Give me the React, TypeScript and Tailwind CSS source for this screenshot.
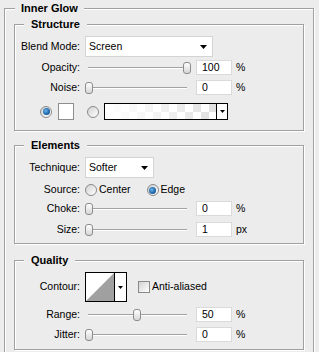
import React from "react";

const LABEL = "w-[65px] shrink-0 text-right";

const Arrow = ({ w = 7, h = 4 }: { w?: number; h?: number }) => (
  <svg width={w} height={h} viewBox={`0 0 ${w} ${h}`}>
    <path d={`M0 0H${w}L${w / 2} ${h}Z`} fill="#000" />
  </svg>
);

function Frame({
  title,
  className,
  legend,
  children,
}: {
  title: string;
  className: string;
  legend: string;
  children: React.ReactNode;
}) {
  return (
    <div
      className={`flex flex-col border border-[#a0a0a0] shadow-[inset_1px_1px_0_#fff,1px_1px_0_#fff] ${className}`}
    >
      <span
        className={`-mt-[7px] self-start bg-[#ececec] text-[11px] leading-[13px] font-bold ${legend}`}
      >
        {title}
      </span>
      {children}
    </div>
  );
}

function Radio({ on }: { on?: boolean }) {
  return (
    <span className="flex h-[12px] w-[12px] shrink-0 items-center justify-center rounded-full border border-[#8a8a8a] bg-linear-to-br from-[#d2d2d2] to-white">
      {on && (
        <span className="h-[7px] w-[7px] rounded-full bg-[radial-gradient(circle_at_40%_40%,#6fb4e8_0,#1f6aad_55%,#0f3f70_100%)]" />
      )}
    </span>
  );
}

function Select({ value, width }: { value: string; width: string }) {
  return (
    <div
      className={`ml-[5px] flex h-[21px] items-center justify-between border border-[#d4d4d4] bg-white pr-[5px] pl-[3px] ${width}`}
    >
      <span>{value}</span>
      <Arrow />
    </div>
  );
}

function SliderRow({
  label,
  value,
  pos,
  unit,
  className,
}: {
  label: string;
  value: string;
  pos: number;
  unit: string;
  className: string;
}) {
  return (
    <div className={`flex h-[15px] items-center ${className}`}>
      <span className={LABEL}>{label}</span>
      <div className="relative ml-[5px] flex h-[15px] w-[106px] items-center">
        <div className="mr-[4px] ml-[3px] h-px flex-1 bg-[#a2a2a2] shadow-[0_1px_0_#fff]" />
        <div
          className="absolute top-[2px] h-[12px] w-[8px] rounded-[3px] border border-[#8c8c8c] bg-linear-to-b from-white to-[#d6d6d6]"
          style={{ left: pos }}
        />
      </div>
      <div className="ml-[5px] flex h-[15px] w-[36px] items-center border border-[#dadada] bg-white pl-[5px]">
        {value}
      </div>
      <span className="ml-[4px]">{unit}</span>
    </div>
  );
}

export default function App() {
  return (
    <div className="h-[352px] w-[319px] overflow-hidden bg-[#ececec] pt-[8px] pl-[4px] font-['Liberation_Sans',Arial,sans-serif] text-[10.5px] text-black">
      <Frame title="Inner Glow" legend="ml-[10px] px-[6px]" className="w-[310px] pb-[20px]">
        {/* Structure */}
        <Frame title="Structure" legend="ml-[9px] px-[7px]" className="mt-[9px] ml-[9px] w-[290px] pb-[10px]">
          <div className="mt-[5px] flex h-[21px] items-center">
            <span className={LABEL}>Blend Mode:</span>
            <Select value="Screen" width="w-[128px]" />
          </div>
          <SliderRow label="Opacity:" value="100" pos={98} unit="%" className="mt-[3px]" />
          <SliderRow label="Noise:" value="0" pos={0} unit="%" className="mt-[5px]" />
          <div className="mt-[8px] flex h-[17px] items-center pl-[25px]">
            <Radio on />
            <div className="ml-[6px] h-[17px] w-[16px] border border-[#8e8e8e] bg-white" />
            <span className="ml-[13px]">
              <Radio />
            </span>
            <div className="ml-[5px] flex h-[17px] w-[124px] border border-black">
              <div className="flex-1 bg-[repeating-conic-gradient(#e0e0e0_0_25%,#fff_0_50%)] bg-size-[16px_16px]">
                <div className="h-full w-full bg-linear-to-r from-white via-white/60 to-white/0" />
              </div>
              <div className="flex w-[11px] items-center justify-center border-l border-black bg-white">
                <Arrow w={5} h={3} />
              </div>
            </div>
          </div>
        </Frame>

        {/* Elements */}
        <Frame title="Elements" legend="ml-[9px] px-[7px]" className="mt-[14px] ml-[9px] w-[290px] pb-[6px]">
          <div className="mt-[5px] flex h-[21px] items-center">
            <span className={LABEL}>Technique:</span>
            <Select value="Softer" width="w-[69px]" />
          </div>
          <div className="mt-[6px] flex h-[12px] items-center">
            <span className={LABEL}>Source:</span>
            <span className="ml-[5px]">
              <Radio />
            </span>
            <span className="ml-[2px]">Center</span>
            <span className="ml-[16px]">
              <Radio on />
            </span>
            <span className="ml-[2px]">Edge</span>
          </div>
          <SliderRow label="Choke:" value="0" pos={0} unit="%" className="mt-[5px]" />
          <SliderRow label="Size:" value="1" pos={0} unit="px" className="mt-[6px]" />
        </Frame>

        {/* Quality */}
        <Frame title="Quality" legend="ml-[9px] px-[7px]" className="mt-[16px] ml-[9px] w-[290px] pb-[7px]">
          <div className="mt-[5px] flex h-[30px] items-center">
            <span className={LABEL}>Contour:</span>
            <div className="ml-[5px] flex h-[30px] w-[42px] border border-black bg-white">
              <svg className="h-full w-[28px]" viewBox="0 0 28 28" preserveAspectRatio="none">
                <path d="M0 28L28 0V28Z" fill="#a0a0a0" />
              </svg>
              <div className="flex flex-1 items-center justify-center border-l border-black">
                <Arrow w={5} h={3} />
              </div>
            </div>
            <div className="ml-[11px] h-[12px] w-[12px] border border-[#8a8a8a] bg-linear-to-br from-[#d2d2d2] to-white" />
            <span className="ml-[2px]">Anti-aliased</span>
          </div>
          <SliderRow label="Range:" value="50" pos={48} unit="%" className="mt-[5px]" />
          <SliderRow label="Jitter:" value="0" pos={0} unit="%" className="mt-[5px]" />
        </Frame>
      </Frame>
    </div>
  );
}
